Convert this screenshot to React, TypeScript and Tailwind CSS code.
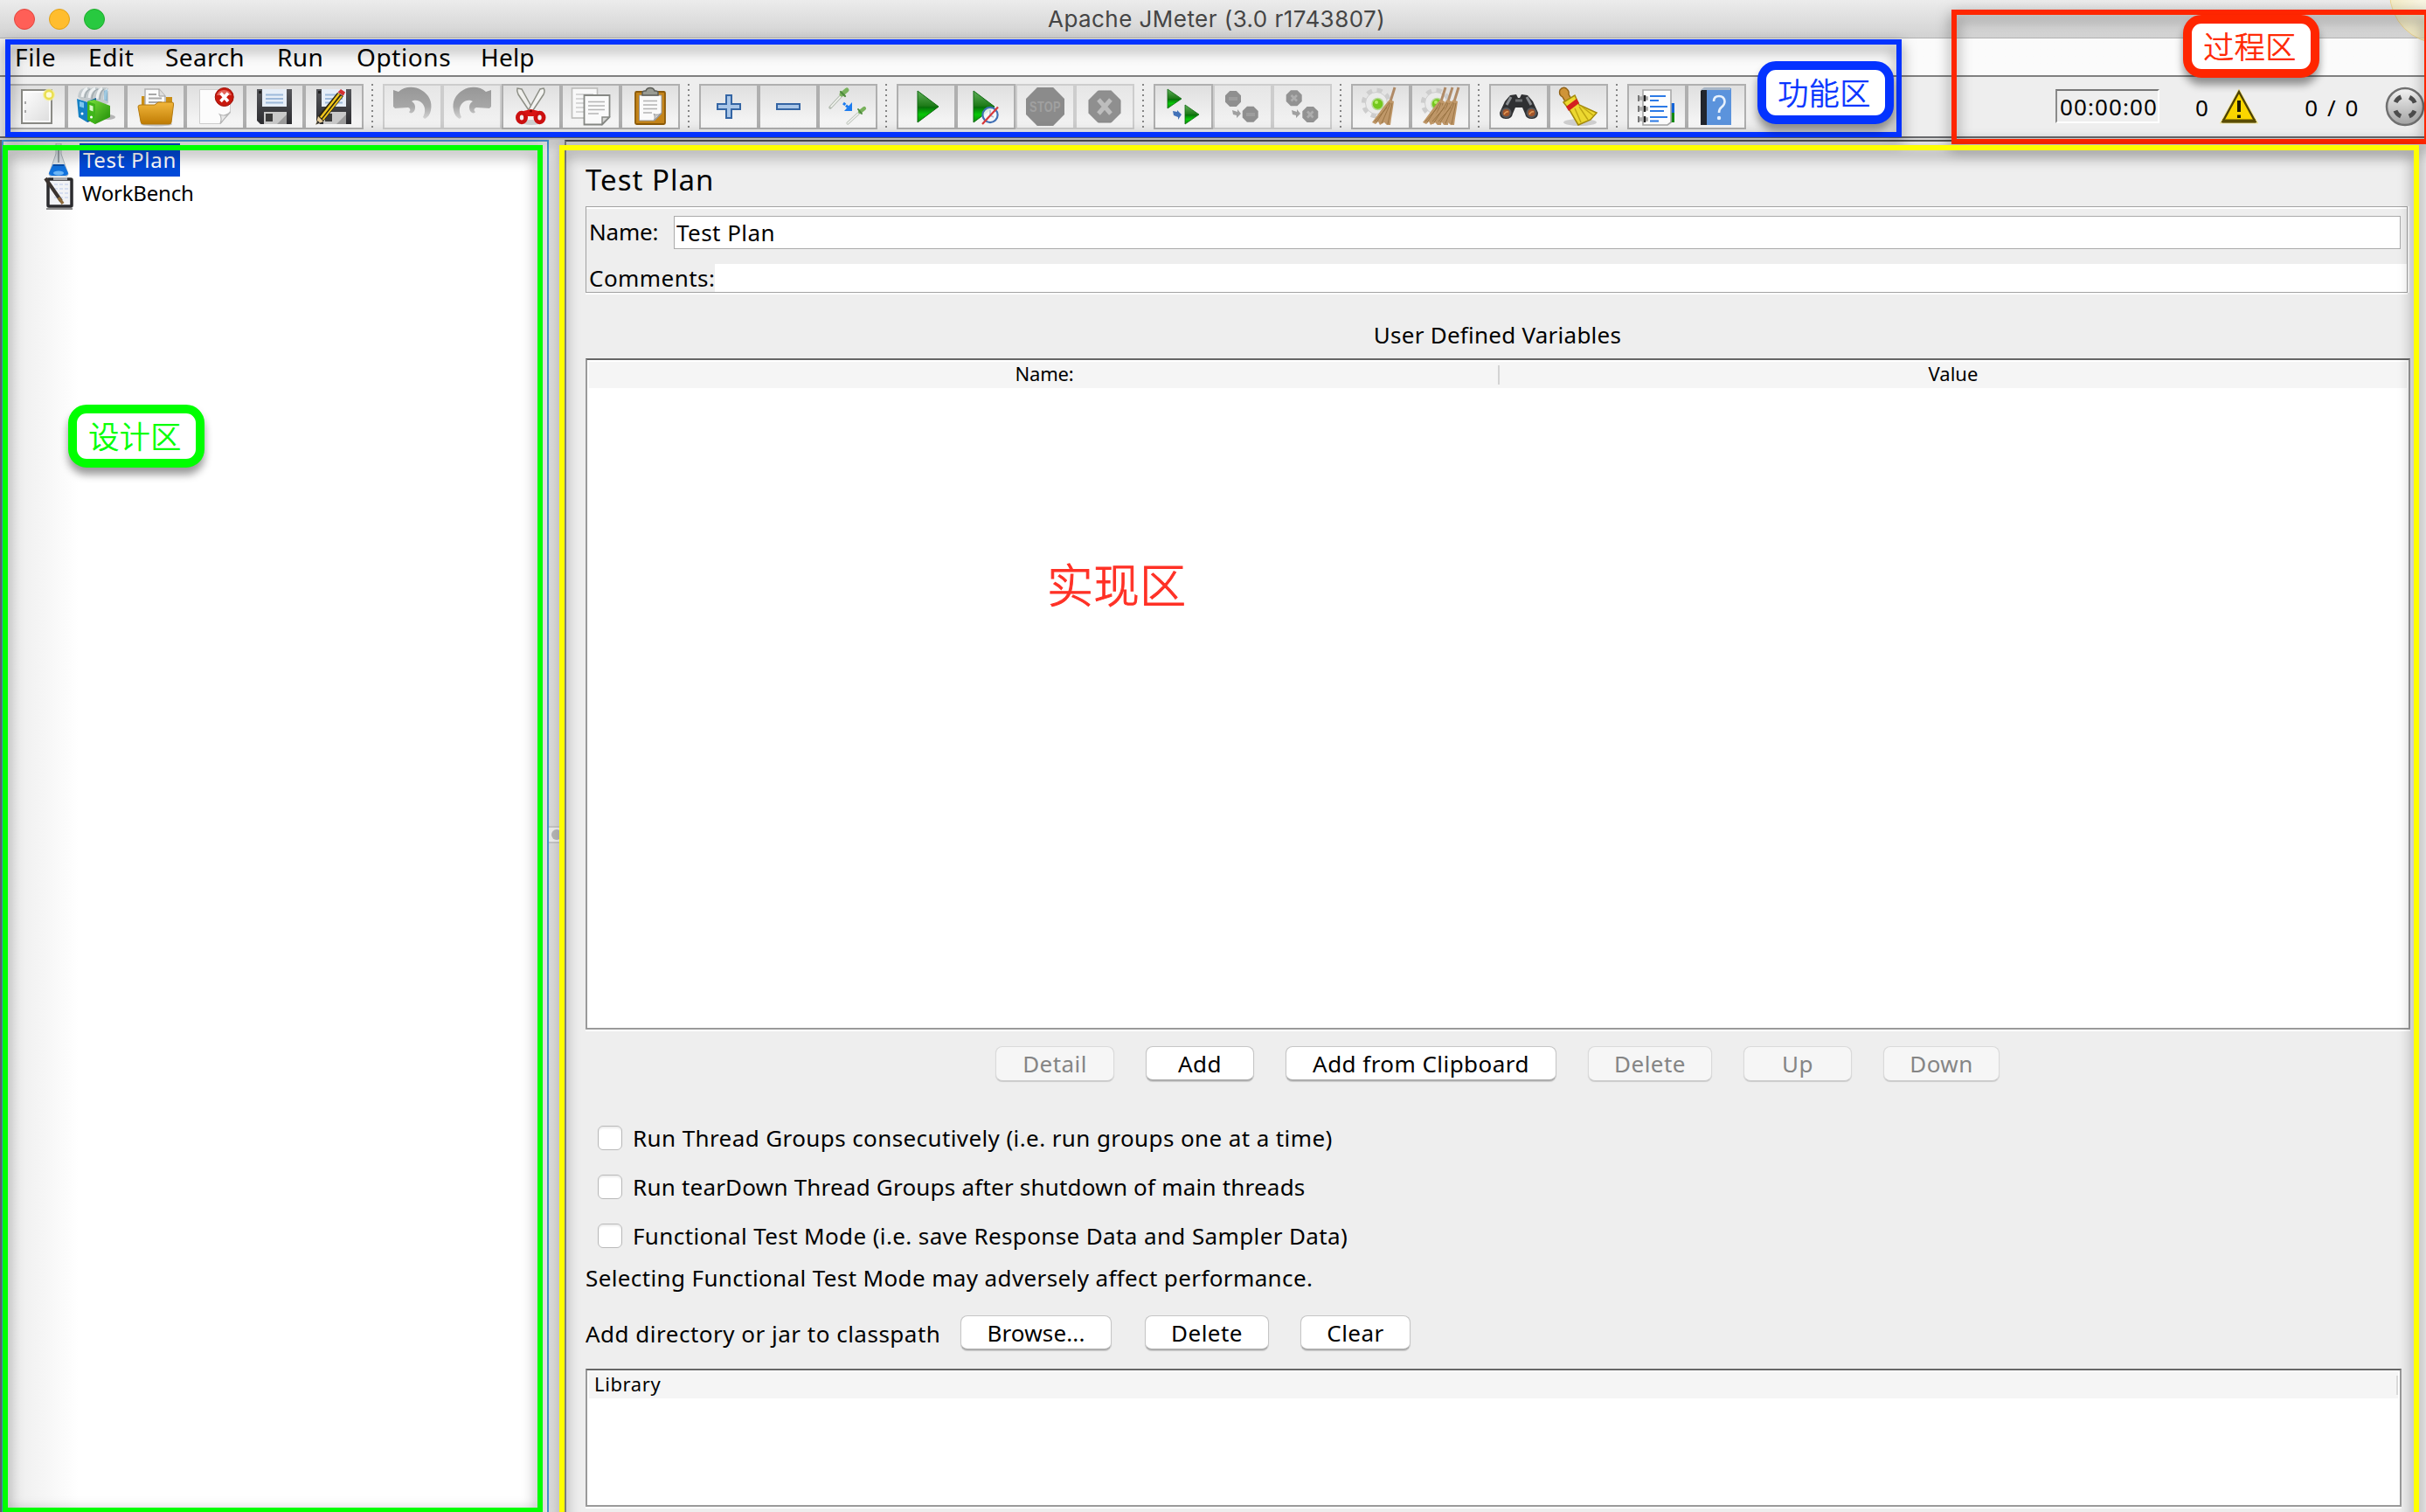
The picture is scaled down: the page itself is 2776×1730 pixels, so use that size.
import React, { type ReactNode } from "react";

const oct = (cx: number, cy: number, r: number) => {
  const k = r * 0.414;
  return `${cx - k},${cy - r} ${cx + k},${cy - r} ${cx + r},${cy - k} ${cx + r},${cy + k} ${cx + k},${cy + r} ${cx - k},${cy + r} ${cx - r},${cy + k} ${cx - r},${cy - k}`;
};

function Gradients() {
  return (
    <svg className="absolute h-0 w-0">
      <defs>
        <linearGradient id="paper" x1="0" y1="0" x2="1" y2="1">
          <stop offset="0" stopColor="#ffffff" />
          <stop offset="1" stopColor="#dcdcdc" />
        </linearGradient>
        <linearGradient id="gold" x1="0" y1="0" x2="0" y2="1">
          <stop offset="0" stopColor="#f2b73c" />
          <stop offset="1" stopColor="#c07c04" />
        </linearGradient>
        <linearGradient id="green" x1="0" y1="0" x2="1" y2="1">
          <stop offset="0" stopColor="#7be03c" />
          <stop offset="1" stopColor="#1d8a06" />
        </linearGradient>
        <linearGradient id="play" x1="0" y1="0" x2="0" y2="1">
          <stop offset="0" stopColor="#5fae58" />
          <stop offset="0.48" stopColor="#1d7a17" />
          <stop offset="0.52" stopColor="#07700a" />
          <stop offset="0.75" stopColor="#08c808" />
          <stop offset="1" stopColor="#0a8a0a" />
        </linearGradient>
        <linearGradient id="dark" x1="0" y1="0" x2="0" y2="1">
          <stop offset="0" stopColor="#55565a" />
          <stop offset="1" stopColor="#2c2c30" />
        </linearGradient>
        <linearGradient id="fade" x1="0" y1="0" x2="0" y2="1">
          <stop offset="0" stopColor="#979797" />
          <stop offset="0.6" stopColor="#a6a6a6" />
          <stop offset="1" stopColor="#d4d4d4" />
        </linearGradient>
        <linearGradient id="knob" x1="0" y1="0" x2="0" y2="1">
          <stop offset="0" stopColor="#f4f4f4" />
          <stop offset="1" stopColor="#a2a2a2" />
        </linearGradient>
      </defs>
    </svg>
  );
}

const floppy = (
  <g>
    <path d="M14 6H54V46H18L14 42Z" fill="url(#dark)" />
    <rect x="20" y="6" width="28" height="20" fill="#e6eef8" />
    <path d="M24 12.5H44M24 17H44M24 21.500H44" stroke="#9db9da" strokeWidth="1.800" />
    <rect x="16" y="8" width="3" height="3" fill="#222" />
    <rect x="22" y="32" width="26" height="14" fill="#c9c9c9" />
    <rect x="24" y="34" width="8" height="9" fill="#3b3b3b" />
    <path d="M37 46L48 35V46Z" fill="#9b9b9b" />
  </g>
);

const undo = (
  <g>
    <path
      d="M12 7L18 9C24 3 36 2 44 7C53 12 57 21 55 30C54 35 52 38 48 40L46 38C49 33 49 26 45 22C41 18 36 18 33 20C37 22 38 27 36 31C34 34 31 34 30 32C32 31 32 28 29 27L14 28L12 26Z"
      fill="url(#fade)"
    />
  </g>
);

const Gear = () => (
  <g>
    <circle cx="29" cy="22" r="14.500" fill="none" stroke="#cdcdcd" strokeWidth="5.500" strokeDasharray="6 5.400" />
    <circle cx="29" cy="22" r="12.500" fill="#ebebeb" stroke="#cdcdcd" strokeWidth="1" />
    <circle cx="30.500" cy="23" r="6.500" fill="#74c81e" stroke="#b9d99a" strokeWidth="1.500" />
    <circle cx="29" cy="21" r="2" fill="#b4ef6a" />
  </g>
);

const Broom = ({ dx = 0 }: { dx?: number }) => (
  <g transform={`translate(${dx} 0)`}>
    <path d="M50 4L45 20" stroke="#b08a66" strokeWidth="3" />
    <path d="M44 18C38 24 32 34 24 44L28 46L31 43L33 47L38 44L41 47L45 47C46 38 48 28 49 20Z" fill="#bf9768" />
    <path d="M44 21L29 44M45 22L35 45M47 22L42 46M41 27L27 43" stroke="#96703f" strokeWidth="0.900" />
  </g>
);

const smallPlay = (x: number, y: number) => (
  <path d={`M${x} ${y}L${x + 16} ${y + 11}L${x} ${y + 22}Z`} fill="url(#play)" stroke="#0f6b10" strokeWidth="0.800" />
);

const greyArrow = <path d="M22 30L28 32V29L32 34L27 39V36L23 35Z" fill="#a0a0a0" />;

const I: Record<string, ReactNode> = {
  create: (
    <g>
      <rect x="17" y="7" width="34" height="38" fill="url(#paper)" stroke="#8a8a85" strokeWidth="2" />
      <rect x="19" y="9" width="30" height="34" fill="none" stroke="#fff" strokeWidth="1.500" />
      <path d="M21 20v3M21 30v3" stroke="#aaa" strokeWidth="2" />
      <circle cx="48" cy="12.500" r="7" fill="#f5ef9a" opacity="0.800" />
      <circle cx="48" cy="12.500" r="4.500" fill="#fdfbd6" stroke="#eadf4e" strokeWidth="2.500" />
    </g>
  ),
  templates: (
    <g>
      <ellipse cx="48" cy="38" rx="8" ry="3" fill="#b5b5b5" />
      <path d="M13 15Q14 6 20 5Q24 3 28 5Q33 3 37 5Q43 3 48 5V22L30 28Z" fill="#c3cacd" />
      <path d="M18 15Q19 7 24 5M26 16Q27 7 33 5M35 17Q36 7 41 5M44 18Q44 9 47 6" stroke="#eff2f3" strokeWidth="3" fill="none" />
      <path d="M21 16Q22 8 27 6M29 17Q30 8 36 6M38 18Q39 8 43 6" stroke="#9ba5aa" strokeWidth="1.300" fill="none" />
      <path d="M43 18V8L47 6V20Z" fill="#4f9fd0" opacity="0.500" />
      <path d="M12 17L24 21V44L14 38Z" fill="#1580c4" />
      <path d="M24 20L34 16V40L24 44Z" fill="#0d5f9c" />
      <path d="M15 20l5 1.500v6l-5-1.500z" fill="#7cc5ef" />
      <path d="M24 20L32 18L50 25V38L33 46L24 41Z" fill="url(#green)" />
      <path d="M24 20L33 23V46L24 41Z" fill="#3fb51a" />
      <path d="M26.500 24l4 1.500v6l-4-1.500z" fill="#d9f7c8" />
      <circle cx="28.500" cy="38" r="1.500" fill="#fff" />
      <circle cx="18" cy="34" r="1.500" fill="#fff" />
    </g>
  ),
  open: (
    <g>
      <ellipse cx="35" cy="46" rx="18" ry="2.500" fill="#c5c5c5" />
      <path d="M18 14H26V24H46V15H53V30H18Z" fill="#c98e16" />
      <path d="M22 6H38L45 14V30H22Z" fill="#fbfbfb" stroke="#b1b1b1" strokeWidth="1.500" />
      <path d="M38 6V14H45" fill="#ddd" stroke="#999" strokeWidth="1" />
      <path d="M26 12H35M26 16.500H41M26 21H41" stroke="#a8a8a8" strokeWidth="2" />
      <path d="M14 26Q14 24 17 24H33L37 21H53Q55 21 54.500 24L52 44Q52 46 49 46H20Q17 46 17 43Z" fill="url(#gold)" stroke="#b47a10" strokeWidth="1" />
    </g>
  ),
  close: (
    <g>
      <path d="M16.500 6.500H51.500V33L40 45.500H16.500Z" fill="#fcfcfc" stroke="#cfcfcf" strokeWidth="1" />
      <path d="M40 45.500C42 40 41 37 39.500 35C44 37 48 36 51.500 32Z" fill="#e9e9e9" stroke="#b5b5b5" strokeWidth="1.200" />
      <circle cx="44.700" cy="15" r="10.500" fill="#c8190e" stroke="#9c1109" strokeWidth="1" />
      <path d="M36 13A9 9 0 0 1 53 13Z" fill="#e4655b" />
      <path d="M40.500 10.500L49 20M49 10.500L40.500 20" stroke="#fff" strokeWidth="3.600" />
    </g>
  ),
  save: floppy,
  saveAs: (
    <g>
      {floppy}
      <path d="M16 37L38 10L45 14L22 43L13.500 46.500Z" fill="#2a2410" />
      <path d="M19 38.500L40 11.500" stroke="#f2c81c" strokeWidth="2.400" />
      <path d="M21.500 41L43 14" stroke="#f2c81c" strokeWidth="2" />
      <path d="M16 37L22 43L13.500 46.500Z" fill="#e8cf9a" />
      <path d="M13.500 46.500l2-4.500 2.500 2.500z" fill="#333" />
      <path d="M38.500 9.500L42 6L47 9.500L45 13.500Z" fill="#d43030" />
    </g>
  ),
  undo,
  redo: <g transform="translate(68 0) scale(-1 1)">{undo}</g>,
  cut: (
    <g>
      <ellipse cx="34" cy="44" rx="12" ry="3" fill="#cfcfcf" />
      <path d="M18 5Q17 8 19 12L35 36L38 33L23 6Z" fill="#efefec" stroke="#8d8f86" strokeWidth="1.500" />
      <path d="M48 5Q50 8 48 12L32 36L29 33L44 6Z" fill="#f4f4f2" stroke="#8d8f86" strokeWidth="1.500" />
      <ellipse cx="23" cy="38.500" rx="4.600" ry="5.300" fill="none" stroke="#cc1010" strokeWidth="4.800" />
      <ellipse cx="43.500" cy="38.500" rx="4.600" ry="5.300" fill="none" stroke="#cc1010" strokeWidth="4.800" />
      <path d="M25 31L33.500 29L42 31L38 37H29Z" fill="#d81414" />
      <circle cx="33.500" cy="31" r="1.500" fill="#8a0000" />
    </g>
  ),
  copy: (
    <g>
      <rect x="12.500" y="5" width="29" height="34" fill="#f8f8f8" stroke="#bdbdbb" strokeWidth="1.600" />
      <path d="M17 12H37M17 17H26M17 22H26M17 27H26M17 32H26" stroke="#cccccc" strokeWidth="1.600" />
      <path d="M26.500 13H55.500V38L47 46.500H26.500Z" fill="#fafafa" stroke="#868884" strokeWidth="1.800" />
      <path d="M31 20.500H50M31 25H50M31 29.500H50M31 34H43" stroke="#b5b5b5" strokeWidth="1.700" />
      <path d="M47 46V38H55Z" fill="#d5d5d3" stroke="#868884" strokeWidth="1.400" />
    </g>
  ),
  paste: (
    <g>
      <rect x="17" y="9" width="34" height="37" rx="1.500" fill="#c4841a" stroke="#8c5a08" strokeWidth="1.800" />
      <path d="M21.500 13H47V34L39 42H21.500Z" fill="#fafafa" stroke="#999" strokeWidth="1" />
      <path d="M26 19.500H42M26 24H42M26 28.500H42M26 33H36" stroke="#b2b2b2" strokeWidth="1.700" />
      <path d="M38 42C40 39 39 36 38 34.500C42 36 45 35 47 33Z" fill="#cfcfcf" stroke="#999" strokeWidth="1" />
      <path d="M25 13V10Q25 8 28 8H29Q30 4.500 34 4.500T39 8H40Q43 8 43 10V13Z" fill="#9a9c94" stroke="#5d5e59" strokeWidth="1.500" />
    </g>
  ),
  plus: <path d="M31 13H37V23H47V29H37V39H31V29H21V23H31Z" fill="#a9c6e8" stroke="#3465a4" strokeWidth="2" />,
  minus: <rect x="21" y="23" width="26" height="6" fill="#a9c6e8" stroke="#3465a4" strokeWidth="2" />,
  toggle: (
    <g strokeLinecap="round">
      <path d="M14 27L28 12" stroke="#b5bcb2" strokeWidth="3.600" />
      <path d="M15 26L28 12" stroke="#f3f5f1" strokeWidth="1.600" />
      <path d="M27 12L33 7" stroke="#79b25c" strokeWidth="5" />
      <path d="M26 9L31 14" stroke="#4d8a3c" strokeWidth="2.200" />
      <path d="M34 45L46 34" stroke="#bfc6bc" strokeWidth="3.200" />
      <path d="M34 45L46 34" stroke="#f5f5f5" strokeWidth="1.400" />
      <path d="M48 32L53 28" stroke="#79b25c" strokeWidth="4.200" />
      <path d="M46 29L50 34" stroke="#4d8a3c" strokeWidth="2" />
      <path d="M29 22L36 28" stroke="#1c7cf0" strokeWidth="3" strokeLinecap="butt" strokeDasharray="3 1" />
      <path d="M39 21V31H30Z" fill="#1c7cf0" />
    </g>
  ),
  play: <path d="M24 8L48 26L24 44Z" fill="url(#play)" stroke="#0f6b10" strokeWidth="1" />,
  playNoTimers: (
    <g>
      <path d="M20 8L44 26L20 44Z" fill="url(#play)" stroke="#0f6b10" strokeWidth="1" />
      <circle cx="39" cy="35.500" r="8.600" fill="#f4f7fb" fillOpacity="0.900" stroke="#3f6fb5" strokeWidth="2.200" />
      <path d="M39 30V36L43 38" stroke="#a9bad0" strokeWidth="1.500" fill="none" />
      <path d="M30 46L48 26.500" stroke="#d8383a" strokeWidth="2.200" />
    </g>
  ),
  stop: (
    <g>
      <polygon points={oct(34, 26, 22)} fill="#8b8b8b" />
      <text x="34" y="32" textAnchor="middle" textLength="36" lengthAdjust="spacingAndGlyphs" className="font-['Liberation_Sans'] text-[17px] font-bold" fill="#a0a0a0">STOP</text>
    </g>
  ),
  shutdown: (
    <g>
      <polygon points={oct(34, 26, 18)} fill="#8f8f8f" stroke="#858585" />
      <path d="M27 18L41 34M41 18L27 34" stroke="#bdbdbd" strokeWidth="5" />
    </g>
  ),
  remoteStart: (
    <g>
      {smallPlay(16, 6)}
      {smallPlay(36, 24)}
      <path d="M22 31L27 32V30L32 35L28 41V38L23 36Z" fill="#4272b8" />
    </g>
  ),
  remoteStop: (
    <g>
      <polygon points={oct(23, 17, 9)} fill="#8f8f8f" />
      <path d="M18 17H28" stroke="#9d9d9d" strokeWidth="4" />
      <polygon points={oct(42.7, 34.7, 9)} fill="#8f8f8f" />
      <path d="M38 35H48" stroke="#9d9d9d" strokeWidth="4" />
      {greyArrow}
    </g>
  ),
  remoteShutdown: (
    <g>
      <polygon points={oct(24.7, 16.3, 9)} fill="#929292" />
      <path d="M21.500 13L28 19.500M28 13L21.500 19.500" stroke="#aeaeae" strokeWidth="2.600" />
      <polygon points={oct(43.3, 35, 9)} fill="#929292" />
      <path d="M40 31.500L46.500 38.500M46.500 31.500L40 38.500" stroke="#aeaeae" strokeWidth="2.600" />
      {greyArrow}
    </g>
  ),
  clear: (
    <g>
      <Gear />
      <Broom />
    </g>
  ),
  clearAll: (
    <g>
      <Gear />
      <Broom dx={-10} />
      <Broom dx={-2} />
      <Broom dx={5} />
    </g>
  ),
  search: (
    <g>
      <path d="M24 13L31 12L33 16H35L37 12L44 13L50 20L56 33Q56 40 49 40T41 34L38 27H30L27 34Q26 40 19 40T12 33L18 20Z" fill="#2f3032" />
      <path d="M25 15L20 24M43 15L48 24" stroke="#8a8d90" strokeWidth="3" />
      <path d="M30 19H38" stroke="#6c6e70" strokeWidth="3" />
      <circle cx="19.500" cy="33" r="5" fill="#a2552a" stroke="#55575a" strokeWidth="2" />
      <circle cx="48.500" cy="33" r="5" fill="#a2552a" stroke="#55575a" strokeWidth="2" />
      <path d="M17 35q2-4 5-3M46 35q2-4 5-3" stroke="#e09a58" strokeWidth="1.500" fill="none" />
    </g>
  ),
  reset: (
    <g>
      <ellipse cx="36" cy="44" rx="19" ry="4" fill="#cfcfcf" />
      <path d="M13 7Q16 3 20 5Q24 8 23 12L27 19L20 22L16 15Q11 12 13 7Z" fill="#cf9438" stroke="#8f6014" strokeWidth="1.400" />
      <path d="M17 21L30 13L35 24L55 33L48 41L34 47L24 30Z" fill="#ecd830" stroke="#a48a0a" strokeWidth="1.500" />
      <path d="M30 28L37 44M35 26L45 41M38 26L51 36" stroke="#bfa512" strokeWidth="1.400" />
      <path d="M20 26L32 17L35 22L23 31Z" fill="#d42020" />
    </g>
  ),
  functions: (
    <g>
      <rect x="46" y="22" width="8" height="11" fill="#1565d8" />
      <rect x="46" y="33" width="8" height="11" fill="#128a12" />
      <path d="M18 7H50V44L46 47H18Z" fill="#fdfdfd" stroke="#a8a8a8" strokeWidth="1.600" />
      <path d="M26 14H44M26 26H46M26 38H46" stroke="#2c7ae6" strokeWidth="2.200" />
      <path d="M26 19H36M26 31H42M26 42.500H36" stroke="#2c7ae6" strokeWidth="2.200" />
      <path d="M14 16.500H24M14 28.500H24M14 40.500H24" stroke="#b0b0b0" strokeWidth="4.500" />
      <path d="M13 13v7M13 25v7M13 37v7" stroke="#777" strokeWidth="2" />
      <path d="M20 13v7M20 25v7M20 37v7" stroke="#222" strokeWidth="2.400" />
    </g>
  ),
  help: (
    <g>
      <path d="M16 8L21 4V46L16 47Z" fill="#1d2026" />
      <path d="M18 6H23V47H16Z" fill="#22262e" />
      <rect x="23" y="5" width="28" height="42" fill="#5b93dc" />
      <path d="M16 7L20 4H50V7Z" fill="#a9b7c8" />
      <path d="M31 20Q31 14 37 14T43.500 20Q43.500 24 39.500 27Q37 29 37 33" stroke="#e8f1fc" strokeWidth="2.600" fill="none" />
      <circle cx="37" cy="39" r="2.200" fill="#e8f1fc" />
    </g>
  ),
};

const groups: [string, boolean][][] = [
  [["create", true], ["templates", true], ["open", true], ["close", true], ["save", true], ["saveAs", true]],
  [["undo", false], ["redo", false], ["cut", true], ["copy", true], ["paste", true]],
  [["plus", true], ["minus", true], ["toggle", true]],
  [["play", true], ["playNoTimers", true], ["stop", false], ["shutdown", false]],
  [["remoteStart", true], ["remoteStop", false], ["remoteShutdown", false]],
  [["clear", true], ["clearAll", true]],
  [["search", true], ["reset", true]],
  [["functions", true], ["help", true]],
];

function ToolButton({ name, on }: { name: string; on: boolean }) {
  return (
    <button
      className={
        on
          ? "h-[52px] w-[68px] border-2 border-[#afafaf] bg-linear-to-b from-[#dfdfdf] to-[#f8f8f8]"
          : "h-[52px] w-[68px] border-2 border-[#cdcdcd] bg-linear-to-b from-[#e6e6e6] to-[#f3f3f3]"
      }
    >
      <svg viewBox="2 2 64 48" className="h-12 w-16">
        {I[name]}
      </svg>
    </button>
  );
}

function Separator() {
  return (
    <div className="flex h-[52px] w-[22px] pl-[9px]">
      <div className="w-[2px] bg-[repeating-linear-gradient(to_bottom,#858585_0px,#858585_2px,transparent_2px,transparent_6px)]" />
    </div>
  );
}

function PushButton({ label, className, off }: { label: string; className: string; off?: boolean }) {
  return (
    <button
      className={`${className} h-10 rounded-[8px] border text-center leading-[36px] shadow-[0_1px_1px_rgba(0,0,0,0.15)] ${
        off ? "border-[#dadada] border-b-[#cacaca] bg-[#f6f6f6] text-[#858585]" : "border-[#c6c6c6] border-b-2 border-b-[#adadad] bg-white text-black"
      }`}
    >
      {label}
    </button>
  );
}

function Check({ label, className }: { label: string; className: string }) {
  return (
    <label className={`flex h-7 items-center gap-[12px] leading-7 ${className}`}>
      <span className="h-7 w-7 rounded-[6px] border border-[#b9b9b9] bg-white shadow-[inset_0_2px_2px_rgba(0,0,0,0.08)]" />
      {label}
    </label>
  );
}

function Frame({ className }: { className: string }) {
  return <div className={`pointer-events-none absolute border-[6px] drop-shadow-[0_6px_8px_rgba(0,0,0,0.5)] ${className}`} />;
}

function Badge({ className, children }: { className: string; children: ReactNode }) {
  return (
    <div
      className={`absolute flex h-[72px] w-[156px] items-center justify-center rounded-[21px] border-[10px] bg-white pr-[3px] pb-[4px] font-['Noto_Sans_CJK_SC',sans-serif] text-[35px] leading-none font-light shadow-[0_8px_10px_rgba(0,0,0,0.4)] [-webkit-text-stroke:0.7px] ${className}`}
    >
      {children}
    </div>
  );
}

export default function App() {
  return (
    <div className="relative flex h-[1730px] w-[2776px] flex-col overflow-hidden bg-[#eeeeee] font-['Noto_Sans','Open_Sans',sans-serif] text-[26px] tracking-[0.45px] text-black">
      <Gradients />

      <header className="flex h-11 shrink-0 items-center border-b border-[#b1b1b1] bg-linear-to-b from-[#ececec] to-[#d2d2d2] pl-4">
        <div className="flex w-[1183px] gap-4">
          <span className="h-6 w-6 rounded-full border border-[#e2463f] bg-[#ff5f57]" />
          <span className="h-6 w-6 rounded-full border border-[#e1a116] bg-[#ffbd2e]" />
          <span className="h-6 w-6 rounded-full border border-[#1dac2b] bg-[#28c940]" />
        </div>
        <h1 className="font-['Inter',sans-serif] text-[26px] leading-[42px] tracking-[0.45px] text-[#454545]">Apache JMeter (3.0 r1743807)</h1>
      </header>

      <nav className="flex h-11 shrink-0 items-center border-b-2 border-[#808080] bg-linear-to-r from-[#f0f0f0] to-[#fbfbfb] to-10% pl-[17px] text-[28px] leading-[44px] tracking-[0.6px]">
        <span className="w-[84px]">File</span>
        <span className="w-[88px]">Edit</span>
        <span className="w-[128px] tracking-[0.4px]">Search</span>
        <span className="w-[91px] tracking-[0.4px]">Run</span>
        <span className="w-[142px]">Options</span>
        <span className="tracking-[0.2px]">Help</span>
      </nav>

      <div className="flex h-[70px] shrink-0 border-b-2 border-[#68696c] bg-[#eeeeee] pt-2 pl-2">
        {groups.map((g, i) => (
          <React.Fragment key={i}>
            {i > 0 && <Separator />}
            {g.map(([n, on]) => (
              <ToolButton key={n} name={n} on={on} />
            ))}
          </React.Fragment>
        ))}
        <div className="mt-[6px] ml-[354px] h-[39px] w-[119px] border-2 border-t-[#777] border-r-white border-b-white border-l-[#8a8a8a] pl-[3px] leading-[36px] tracking-[1.1px]">
          00:00:00
        </div>
        <div className="ml-[41px] leading-[54px]">0</div>
        <svg viewBox="0 0 44 40" className="mt-[6px] ml-[13px] h-10 w-11">
          <path d="M22 2L42 38H2Z" fill="#fad600" stroke="#f3e7a0" strokeWidth="3" />
          <path d="M22 3L40.500 37H3.500Z" fill="#fad600" stroke="#4d4205" strokeWidth="2.400" />
          <path d="M3 36.500H41" stroke="#5b4d02" strokeWidth="4" />
          <path d="M22 13V26M22 29.500V33" stroke="#1c1a05" strokeWidth="4" />
        </svg>
        <div className="ml-[53px] w-[92px] leading-[54px] tracking-[2px] whitespace-nowrap">0 / 0</div>
        <svg viewBox="0 0 46 46" className="mt-[3px] -mr-1 h-[46px] w-[46px] shrink-0">
          <circle cx="23" cy="23" r="21" fill="url(#knob)" stroke="#707070" strokeWidth="2.500" />
          <circle cx="23" cy="23" r="12" fill="none" stroke="#4c4c4c" strokeWidth="5" strokeDasharray="9 9.850" strokeDashoffset="-4.900" />
        </svg>
      </div>

      <main className="flex min-h-0 flex-1 border-t-2 border-[#dedede]">
        <section className="w-[628px] border-l-2 border-[#6e6e6e]">
          <div className="h-[1580px] w-[626px] border-2 border-[#4c9fe4] bg-[linear-gradient(to_right,#ebebeb,#fff_86px)] pt-[2px] text-[24px]">
            <div className="flex h-[38px]">
              <svg viewBox="0 0 26 38" className="ml-[50px] h-[38px] w-[26px]">
                <path d="M10 0H16V12L24 35Q24 38 20 38H6Q2 38 2 35L10 12Z" fill="#dfe6ea" stroke="#b4bcc2" strokeWidth="1" />
                <path d="M6.500 24H19.500L24 34Q24 37 20 37H6Q2 37 2 34Z" fill="#1272dc" />
                <path d="M7 25H19" stroke="#0b4fa8" strokeWidth="2" />
                <ellipse cx="13" cy="34" rx="6" ry="2.500" fill="#6db6f6" />
                <path d="M13 3V22" stroke="#9aa2a8" strokeWidth="2" />
              </svg>
              <span className="ml-[11px] w-[115px] bg-[#0049d8] pl-1 leading-[38px] tracking-[0.7px] text-white">Test Plan</span>
            </div>
            <div className="flex h-[38px]">
              <svg viewBox="0 0 36 38" className="ml-[45px] h-[38px] w-[36px]">
                <rect x="6" y="3" width="27" height="31" rx="1" fill="#f1f3f6" stroke="#2b2b2e" strokeWidth="3.500" />
                <path d="M12 1H28V4H12Z" fill="#a7a9ad" />
                <path d="M13 9H29M13 14H29M13 19H29M13 24H29" stroke="#cdd8ee" strokeWidth="1.500" strokeDasharray="4 2" />
                <path d="M3 2L21 28" stroke="#3b3430" strokeWidth="4" />
                <path d="M18 24L23 31" stroke="#8c6a3a" strokeWidth="3.500" />
                <path d="M4 37H34" stroke="#8d8d8d" strokeWidth="2" />
              </svg>
              <span className="ml-[5px] pl-1 leading-[38px] tracking-[-0.2px]">WorkBench</span>
            </div>
          </div>
        </section>

        <div className="flex w-[18px] items-center bg-linear-to-r from-[#eeeeee] to-[#e4e4e4] pt-[19px]">
          <div className="flex h-5 w-[18px] items-center border-y-2 border-[#d4d4d4] bg-white pl-[3px]">
            <span className="h-3 w-3 rounded-full bg-[#c4c4c4]" />
          </div>
        </div>

        <section className="flex flex-1 flex-col border-t-2 border-l-2 border-t-[#565656] border-l-[#8f8f8f] pl-[22px]">
          <h2 className="mt-[22px] h-11 text-[33px] leading-[44px] tracking-[1px]">Test Plan</h2>

          <div className="mt-2 flex h-[99px] w-[2085px] flex-col border border-[#a2a2a2] pt-[10px] shadow-[inset_0_2px_0_#fff,0_2px_0_#fff,2px_0_0_#fff]">
            <div className="flex h-[38px] pl-[3px] leading-[36px]">
              <span className="w-[97px] tracking-[-0.2px]">Name:</span>
              <div className="w-[1976px] border border-[#ababab] bg-white pl-[2px]">Test Plan</div>
            </div>
            <div className="mt-[17px] flex h-8 pl-[3px] leading-8">
              <span className="w-[144px]">Comments:</span>
              <div className="flex-1 bg-white" />
            </div>
          </div>

          <h3 className="mt-[27px] h-11 w-[2087px] text-center leading-[43px] tracking-[0.25px]">User Defined Variables</h3>

          <div className="mt-1 h-[768px] w-[2088px] shrink-0 border-2 border-[#9a9a9a] border-t-[#666] bg-white p-[2px] shadow-[0_2px_0_#fff]">
            <div className="flex h-[30px] bg-[#f5f5f5] text-center text-[22px] leading-[27px] tracking-normal">
              <div className="flex-1 pl-[2px] tracking-[-0.2px]">Name:</div>
              <div className="mt-1 h-[22px] w-[2px] bg-[#d3d3d3]" />
              <div className="flex-1">Value</div>
            </div>
          </div>

          <div className="mt-[19px] flex w-[2087px] justify-center gap-9">
            <PushButton label="Detail" className="w-[136px]" off />
            <PushButton label="Add" className="w-[124px]" />
            <PushButton label="Add from Clipboard" className="w-[310px]" />
            <PushButton label="Delete" className="w-[142px]" off />
            <PushButton label="Up" className="w-[124px]" off />
            <PushButton label="Down" className="w-[133px]" off />
          </div>

          <div className="mt-[51px] ml-[14px] flex flex-col gap-7">
            <Check label="Run Thread Groups consecutively (i.e. run groups one at a time)" className="tracking-[0.4px]" />
            <Check label="Run tearDown Thread Groups after shutdown of main threads" className="tracking-[0.21px]" />
            <Check label="Functional Test Mode (i.e. save Response Data and Sampler Data)" className="tracking-[0.38px]" />
          </div>
          <p className="mt-4 h-9 leading-9 tracking-[0.38px]">Selecting Functional Test Mode may adversely affect performance.</p>

          <div className="mt-[25px] flex h-10">
            <span className="w-[429px] leading-[42px] tracking-[0.5px]">Add directory or jar to classpath</span>
            <PushButton label="Browse..." className="mr-[38px] w-[173px] tracking-[0.15px]" />
            <PushButton label="Delete" className="mr-9 w-[142px]" />
            <PushButton label="Clear" className="w-[126px]" />
          </div>

          <div className="mt-[21px] h-[158px] w-[2078px] shrink-0 border-2 border-[#9a9a9a] border-t-[#666] bg-white p-[2px] shadow-[0_2px_0_#fff]">
            <div className="flex h-[30px] justify-between bg-[#f5f5f5] pl-[6px] text-[22px] leading-[27px] tracking-[0.6px]">
              <span>Library</span>
              <div className="mt-1 h-[22px] w-[2px] bg-[#dadada]" />
            </div>
          </div>
        </section>
      </main>

      {/* translucent pointer halo in the window corner */}
      <div className="absolute top-[-66px] left-[2734px] h-[116px] w-[116px] rounded-full border border-[#f0cf70] bg-[radial-gradient(circle,#fffbe0_30%,#f4e49a)] opacity-70" />

      <Frame className="top-[45px] left-[6px] h-[112px] w-[2170px] border-[#0433ff]" />
      <Frame className="top-[166px] left-[3px] h-[1565px] w-[618px] border-[#00ff00]" />
      <Frame className="top-[11px] left-[2233px] h-[154px] w-[547px] border-[#ff2600]" />
      <Frame className="top-[166px] left-[640px] h-[1600px] w-[2128px] border-[#ffff00]" />

      <Badge className="top-[70px] left-[2011px] border-[#0433ff] text-[#0433ff]">功能区</Badge>
      <Badge className="top-[17px] left-[2498px] border-[#ff2600] text-[#ff2600]">过程区</Badge>
      <Badge className="top-[463px] left-[78px] border-[#00ff00] text-[#00ff00]">设计区</Badge>
      <div className="absolute top-[641px] left-[1198px] font-['Noto_Sans_CJK_SC',sans-serif] text-[53px] leading-[53px] font-light tracking-normal text-[#ff3126] [-webkit-text-stroke:1px]">
        实现区
      </div>
    </div>
  );
}
